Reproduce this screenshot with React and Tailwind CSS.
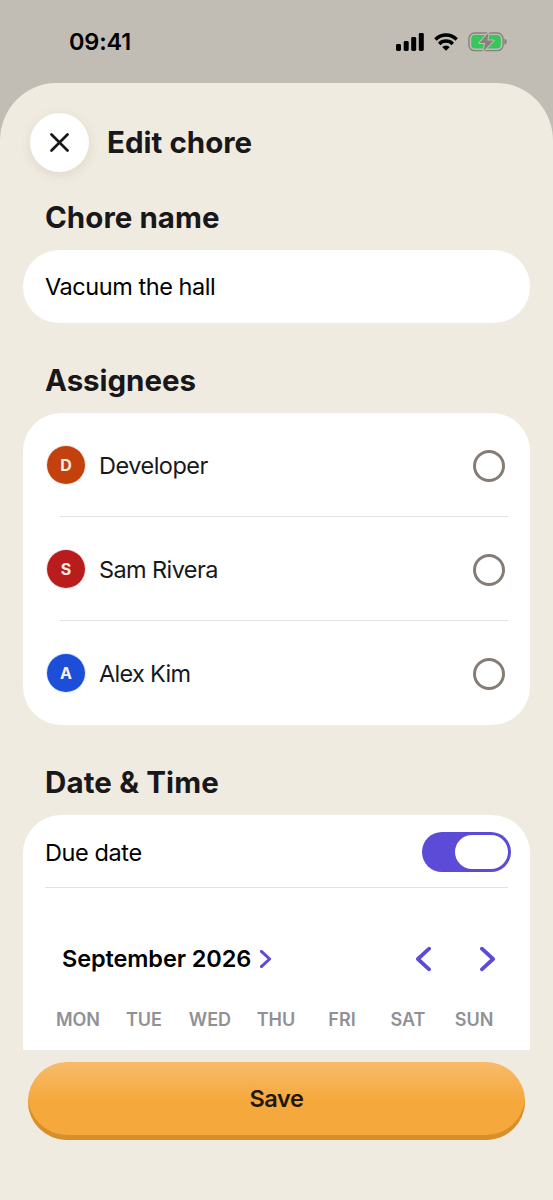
import React from "react";

const people = [
  { name: "Developer", initial: "D", color: "bg-[#c2410c]", ring: "border-[#fbe6dd]", tracking: "tracking-[-0.5px]" },
  { name: "Sam Rivera", initial: "S", color: "bg-[#b91c1c]", ring: "border-[#fbe1e1]", tracking: "tracking-[-0.6px]" },
  { name: "Alex Kim", initial: "A", color: "bg-[#1d4ed8]", ring: "border-[#dbe8fd]", tracking: "tracking-[-0.7px]" },
];

const weekdays = ["MON", "TUE", "WED", "THU", "FRI", "SAT", "SUN"];

const StatusBar = () => (
  <div className="flex h-[83px] items-center justify-between pl-[69px] pr-[46px] text-black">
    <span className="text-[23.5px] font-semibold leading-none tracking-[-0.15px]">09:41</span>
    <div className="flex items-center">
      <svg width="28" height="18" viewBox="0 0 28 18" fill="currentColor">
        <rect x="0" y="11" width="5" height="7" rx="1.4" />
        <rect x="7.7" y="8" width="5" height="10" rx="1.4" />
        <rect x="15.2" y="4" width="5" height="14" rx="1.4" />
        <rect x="22.8" y="0" width="5" height="18" rx="1.4" />
      </svg>
      <svg className="ml-[10px]" width="24" height="18" viewBox="0 0 24 18" fill="none" stroke="currentColor" strokeWidth="3.5">
        <path d="M1.4 6.4a15.2 15.2 0 0 1 21.2 0" />
        <path d="M5.2 10.9a9.7 9.7 0 0 1 13.6 0" />
        <path d="M12 17.8 8.2 14.1a5.4 5.4 0 0 1 7.6 0z" fill="currentColor" stroke="none" />
      </svg>
      <svg className="ml-[10px]" width="39" height="20" viewBox="0 0 39 20">
        <rect x="0.9" y="1" width="34.2" height="17.6" rx="5.6" fill="none" stroke="#85827c" strokeWidth="1.4" />
        <path d="M36.4 6.8c1.5.6 2.4 1.7 2.4 3s-.9 2.5-2.4 3.1z" fill="#85827c" />
        <rect x="3.2" y="3.1" width="29.6" height="13.4" rx="3.8" fill="#34c759" />
        <path
          d="M20.6 0.4 11.4 11h5.8L15.2 19.4 25.6 8.6h-6.2z"
          fill="#85827c"
          stroke="#c1bdb4"
          strokeWidth="2"
          strokeLinejoin="round"
          paintOrder="stroke"
        />
      </svg>
    </div>
  </div>
);

const SectionTitle = ({ children, className }) => (
  <h2 className={`pb-[2px] pl-[45px] text-[29.5px] font-bold leading-[34px] text-[#18181b] ${className}`}>{children}</h2>
);

const Chevron = ({ flip, className, width, height, stroke }) => (
  <svg
    className={className}
    width={width}
    height={height}
    viewBox="0 0 16 26"
    fill="none"
    stroke="#5b4bd6"
    strokeWidth={stroke}
    strokeLinecap="round"
    strokeLinejoin="round"
  >
    <path d={flip ? "M14 2 2 13l12 11" : "M2 2l12 11L2 24"} />
  </svg>
);

const PersonRow = ({ person, last }) => (
  <div className="relative flex h-[104px] items-center pl-[23px] pr-[25px]">
    <div className={`flex size-[40px] items-center justify-center rounded-full border ${person.ring}`}>
      <div className={`flex size-[38px] items-center justify-center rounded-full text-[16px] font-bold leading-none text-[#fdeeea] ${person.color}`}>
        {person.initial}
      </div>
    </div>
    <span className={`ml-[13px] flex-1 pt-[2px] text-[23.5px] leading-[30px] text-[#18181b] ${person.tracking}`}>{person.name}</span>
    <div className="mt-px size-[32px] rounded-full border-3 border-[#857d75]" />
    {!last && <div className="absolute bottom-0 left-[37px] right-[22px] h-px bg-[#e2e2e3]" />}
  </div>
);

export default function App() {
  return (
    <div className="h-[1200px] w-[553px] overflow-hidden bg-[#c1bdb4] font-['Inter','Liberation_Sans',sans-serif]">
      <StatusBar />
      <main className="flex h-[1117px] flex-col rounded-t-[56px_58px] bg-[#f0ebe0]">
        <header className="flex h-[120px] items-center pl-[30px]">
          <button className="-mt-px flex size-[59px] items-center justify-center rounded-full bg-white shadow-[0_3px_12px_rgba(80,60,20,0.10)]">
            <svg width="19" height="19" viewBox="0 0 19 19" fill="none" stroke="#18181b" strokeWidth="2.7" strokeLinecap="round">
              <path d="M1.5 1.5 17.5 17.5M17.5 1.5 1.5 17.5" />
            </svg>
          </button>
          <h1 className="ml-[18px] pb-[2px] text-[29.5px] font-bold leading-[34px] tracking-[0.02px] text-[#18181b]">Edit chore</h1>
        </header>

        <SectionTitle className="-mt-[3px] tracking-[0.05px]">Chore name</SectionTitle>
        <div className="mx-[23px] mt-[14px] flex h-[73px] items-center rounded-[36px] bg-white pl-[22px]">
          <span className="pt-px text-[23.5px] leading-[30px] tracking-[-0.45px] text-black">Vacuum the hall</span>
        </div>

        <SectionTitle className="mt-[40px] tracking-[-0.05px]">Assignees</SectionTitle>
        <div className="mx-[23px] mt-[14px] rounded-[38px] bg-white">
          {people.map((person, i) => (
            <PersonRow key={person.name} person={person} last={i === people.length - 1} />
          ))}
        </div>

        <SectionTitle className="mt-[40px] tracking-[0.13px]">Date &amp; Time</SectionTitle>
        <div className="mx-[23px] mt-[14px] h-[235px] rounded-t-[38px] bg-white">
          <div className="ml-[22px] mr-[22px] flex h-[73px] items-center justify-between border-b border-[#e2e2e3] pt-[2px]">
            <span className="pt-px text-[23.5px] leading-[30px] tracking-[-0.4px] text-black">Due date</span>
            <div className="-mr-[3px] flex h-[40px] w-[89px] items-center justify-end rounded-full bg-[#5b4bd6] pr-[3px]">
              <div className="h-[34px] w-[53px] rounded-full bg-white" />
            </div>
          </div>
          <div className="mt-[50px] flex h-[42px] items-center pl-[39px] pr-[35px]">
            <span className="text-[23.5px] font-semibold leading-[30px] tracking-[-0.1px] text-black">September 2026</span>
            <Chevron className="ml-[9px]" width={11} height={18} stroke={4.4} />
            <Chevron className="ml-auto" width={15} height={26} stroke={4} flip />
            <Chevron className="ml-[49px]" width={15} height={26} stroke={4} />
          </div>
          <div className="mt-[26px] ml-[22px] grid w-[462px] grid-cols-7 text-center text-[18px] font-semibold leading-[27px] text-[#919195]">
            {weekdays.map((day) => (
              <span key={day}>{day}</span>
            ))}
          </div>
        </div>

        <button className="mx-[28px] mt-[12px] flex h-[78px] items-center justify-center rounded-[39px] bg-linear-to-b from-[#f8bb69] from-0% via-[#f5a83b] via-50% to-[#f5a83b] pb-[4px] text-[23.5px] font-semibold leading-[30px] tracking-[-0.4px] text-[#1f1708] shadow-[inset_0_-5px_0_#d78f2b]">
          Save
        </button>
      </main>
    </div>
  );
}
